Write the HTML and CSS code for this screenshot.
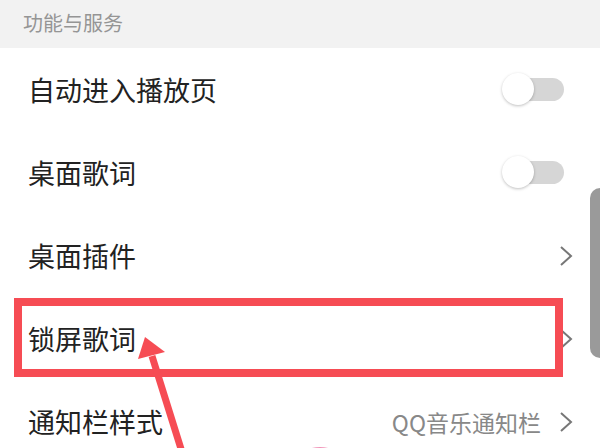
FILE: index.html
```html
<!DOCTYPE html>
<html>
<head>
    <title>设置</title>
    <link rel="stylesheet" href="styles.css">
</head>
<body>
    <div class="screen">
        <div class="section-title">功能与服务</div>

        <div class="setting-list">
            <div class="setting-row">
                <span class="setting-label">自动进入播放页</span>
                <span class="switch"><span class="switch-knob"></span></span>
            </div>
            <div class="setting-row">
                <span class="setting-label">桌面歌词</span>
                <span class="switch"><span class="switch-knob"></span></span>
            </div>
            <div class="setting-row">
                <span class="setting-label">桌面插件</span>
                <svg class="chevron" viewBox="0 0 14 22"><polyline points="2,2 12,11 2,20"/></svg>
            </div>
            <div class="setting-row">
                <span class="setting-label">锁屏歌词</span>
                <svg class="chevron" viewBox="0 0 14 22"><polyline points="2,2 12,11 2,20"/></svg>
            </div>
            <div class="setting-row">
                <span class="setting-label">通知栏样式</span>
                <span class="setting-value">QQ音乐通知栏</span>
                <svg class="chevron" viewBox="0 0 14 22"><polyline points="2,2 12,11 2,20"/></svg>
            </div>
        </div>

        <!-- annotation overlays -->
        <div class="scroll-thumb"></div>
        <div class="highlight-box"></div>
        <svg class="annotation" viewBox="0 0 600 448">
            <ellipse cx="320" cy="474" rx="30" ry="27" fill="#e8508a" opacity="0.6"/>
            <line x1="182" y1="452" x2="152" y2="356" stroke="#f64c54" stroke-width="7"/>
            <polygon points="145,337 138,359 165,352" fill="#f64c54"/>
        </svg>
    </div>
</body>
</html>
```

FILE: styles.css
```css
body {
    margin: 0;
    padding: 0;
    background-color: #fff;
    font-family: "Noto Sans CJK SC", "Noto Sans", sans-serif;
}
.screen {
    position: relative;
    width: 600px;
    height: 448px;
    overflow: hidden;
}
.section-title {
    height: 48px;
    background-color: #f2f2f2;
    color: #959595;
    font-size: 20px;
    line-height: 46px;
    padding-left: 23px;
}
.setting-row {
    display: flex;
    align-items: center;
    height: 83px;
    padding: 0 27px 0 28px;
}
.setting-label {
    flex-grow: 1;
    font-size: 27px;
    color: #222;
}
.setting-value {
    font-size: 23px;
    color: #888;
    margin-right: 18px;
}
.chevron {
    width: 14px;
    height: 22px;
    fill: none;
    stroke: #777;
    stroke-width: 2;
}
.switch {
    position: relative;
    width: 44px;
    height: 23px;
    margin-right: 9px;
    border-radius: 12px;
    background-color: #d6d6d6;
}
.switch-knob {
    position: absolute;
    left: -18px;
    top: -5px;
    width: 32px;
    height: 32px;
    border-radius: 50%;
    background-color: #fff;
    box-shadow: 0 1px 3px rgba(0, 0, 0, 0.25);
}
.scroll-thumb {
    position: absolute;
    left: 590px;
    top: 188px;
    width: 24px;
    height: 170px;
    border-radius: 10px;
    background-color: #9a9a9a;
}
.highlight-box {
    position: absolute;
    left: 14px;
    top: 298px;
    width: 533px;
    height: 63px;
    border: 8px solid #f64c54;
}
.annotation {
    position: absolute;
    left: 0;
    top: 0;
    width: 600px;
    height: 448px;
}
```
